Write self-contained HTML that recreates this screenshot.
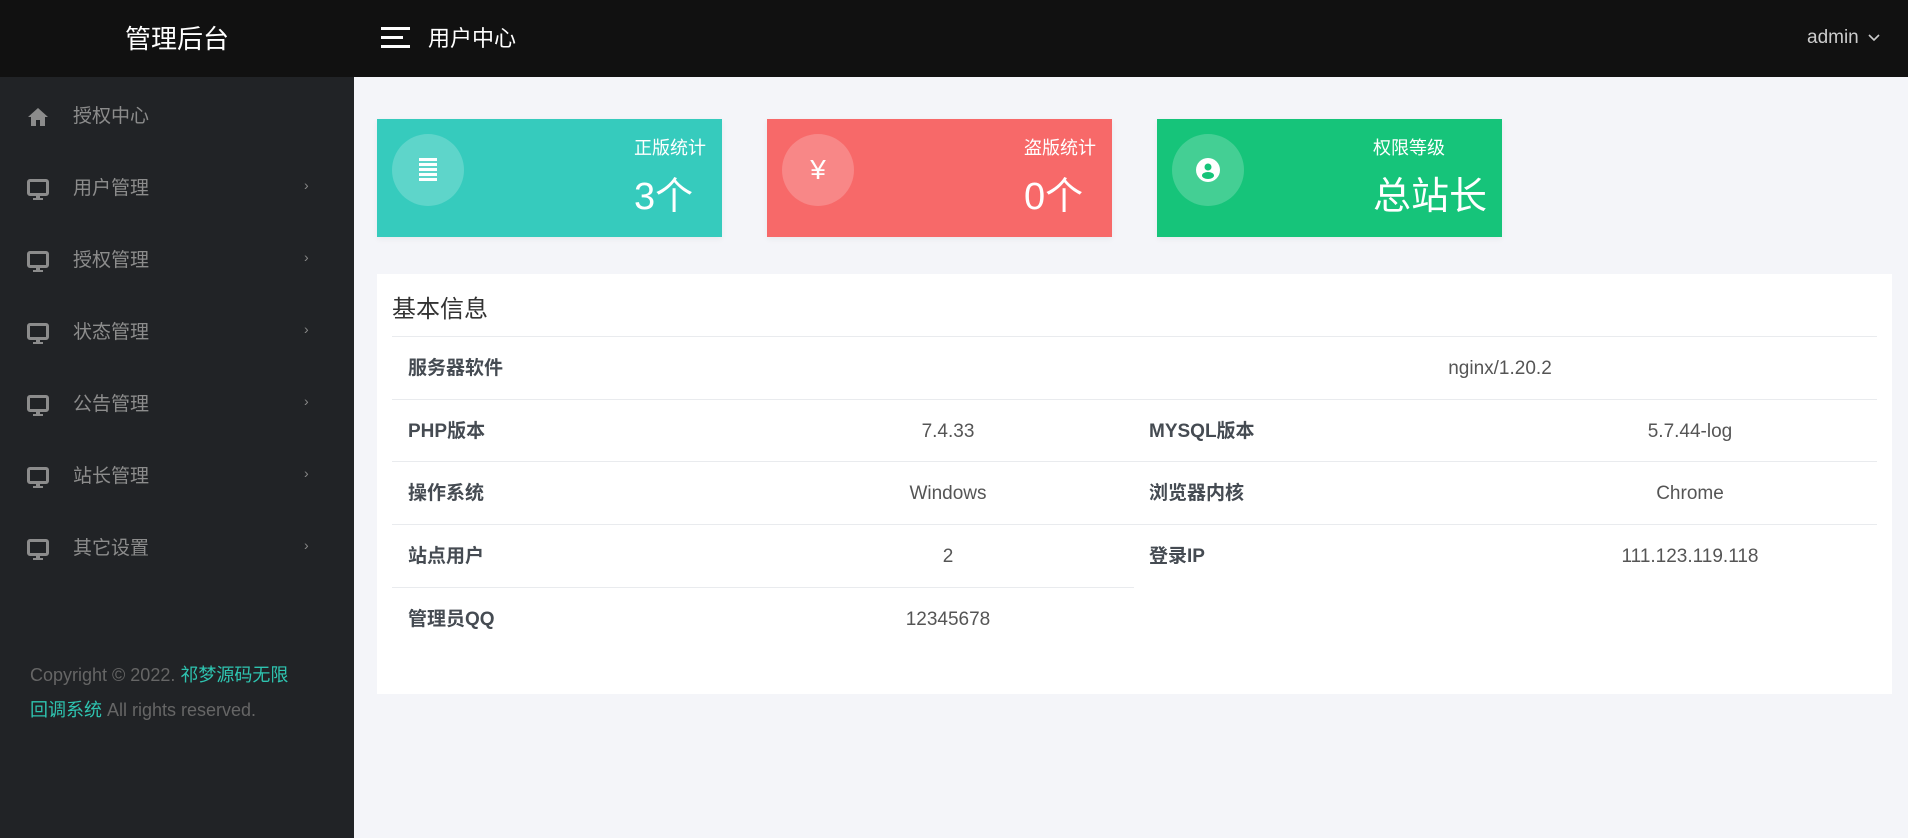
<!DOCTYPE html>
<html><head><meta charset="utf-8"><style>
*{margin:0;padding:0;box-sizing:border-box}
body{width:1908px;height:838px;overflow:hidden;background:#f4f5f9;font-family:"Liberation Sans","Noto Sans CJK SC",sans-serif;position:relative}
.a{position:absolute}
#hd{left:0;top:0;width:1908px;height:77px;background:#111}
#sb{left:0;top:77px;width:354px;height:761px;background:#212326}
.mi{position:absolute;left:0;width:354px;height:40px;color:#8c8c8c;font-size:19px;line-height:40px}
.mi .t{position:absolute;left:73px}
.mi .ic{position:absolute;left:27px;top:10px}
.mi .ch{position:absolute;left:304px;top:-4px;font-size:14px;color:#888}
.card{position:absolute;top:119px;width:345px;height:118px;color:#fff;box-shadow:0 2px 6px rgba(0,0,0,.05)}
.card .c{position:absolute;left:15px;top:15px;width:72px;height:72px;border-radius:50%;background:rgba(255,255,255,.2)}
.card .r{position:absolute;right:16px;top:16px}
.card .l{font-size:18px;line-height:26px}
.card .v{font-size:38px;line-height:50px;margin-top:11px}
#pn{left:377px;top:274px;width:1515px;height:420px;background:#fff}
.ln{position:absolute;height:1px;background:#e9ebee}
.lb{position:absolute;font-weight:bold;font-size:19px;color:#454b52;line-height:24px}
.vl{position:absolute;font-size:19px;color:#555;line-height:24px;text-align:center;width:370px}
</style></head><body>
<div class="a" id="hd">
 <div class="a" style="left:0;width:354px;top:1px;line-height:77px;text-align:center;color:#fff;font-size:26px">管理后台</div>
 <div class="a" style="left:381px;top:27px;width:29px;height:22px">
  <div style="height:3px;background:#fff;width:29px"></div>
  <div style="height:3px;background:#fff;width:22px;margin-top:6px"></div>
  <div style="height:3px;background:#fff;width:29px;margin-top:6px"></div>
 </div>
 <div class="a" style="left:428px;top:0;line-height:77px;color:#fff;font-size:22px">用户中心</div>
 <div class="a" style="left:1807px;top:0;line-height:76px;color:#ccc;font-size:19px">admin <svg width="14" height="10" viewBox="0 0 14 10" style="margin-left:3px"><path d="M2 2l5 5 5-5" fill="none" stroke="#ccc" stroke-width="1.6"/></svg></div>
</div>
<div class="a" id="sb">
 <div class="mi" style="top:20px"><svg class="ic" width="22" height="20" viewBox="0 0 22 20"><path d="M11 1L1 10h3v9h5v-6h4v6h5v-9h3z" fill="#8c8c8c"/></svg><span class="t">授权中心</span></div>
 <div class="mi" style="top:92px"><svg class="ic" width="22" height="22" viewBox="0 0 22 22"><rect x="1.5" y="1.5" width="19" height="14" rx="1.5" fill="none" stroke="#8c8c8c" stroke-width="3"/><rect x="9" y="16" width="4" height="3" fill="#8c8c8c"/><rect x="6" y="19" width="10" height="2" fill="#8c8c8c"/></svg><span class="t">用户管理</span><span class="ch">›</span></div>
 <div class="mi" style="top:164px"><svg class="ic" width="22" height="22" viewBox="0 0 22 22"><rect x="1.5" y="1.5" width="19" height="14" rx="1.5" fill="none" stroke="#8c8c8c" stroke-width="3"/><rect x="9" y="16" width="4" height="3" fill="#8c8c8c"/><rect x="6" y="19" width="10" height="2" fill="#8c8c8c"/></svg><span class="t">授权管理</span><span class="ch">›</span></div>
 <div class="mi" style="top:236px"><svg class="ic" width="22" height="22" viewBox="0 0 22 22"><rect x="1.5" y="1.5" width="19" height="14" rx="1.5" fill="none" stroke="#8c8c8c" stroke-width="3"/><rect x="9" y="16" width="4" height="3" fill="#8c8c8c"/><rect x="6" y="19" width="10" height="2" fill="#8c8c8c"/></svg><span class="t">状态管理</span><span class="ch">›</span></div>
 <div class="mi" style="top:308px"><svg class="ic" width="22" height="22" viewBox="0 0 22 22"><rect x="1.5" y="1.5" width="19" height="14" rx="1.5" fill="none" stroke="#8c8c8c" stroke-width="3"/><rect x="9" y="16" width="4" height="3" fill="#8c8c8c"/><rect x="6" y="19" width="10" height="2" fill="#8c8c8c"/></svg><span class="t">公告管理</span><span class="ch">›</span></div>
 <div class="mi" style="top:380px"><svg class="ic" width="22" height="22" viewBox="0 0 22 22"><rect x="1.5" y="1.5" width="19" height="14" rx="1.5" fill="none" stroke="#8c8c8c" stroke-width="3"/><rect x="9" y="16" width="4" height="3" fill="#8c8c8c"/><rect x="6" y="19" width="10" height="2" fill="#8c8c8c"/></svg><span class="t">站长管理</span><span class="ch">›</span></div>
 <div class="mi" style="top:452px"><svg class="ic" width="22" height="22" viewBox="0 0 22 22"><rect x="1.5" y="1.5" width="19" height="14" rx="1.5" fill="none" stroke="#8c8c8c" stroke-width="3"/><rect x="9" y="16" width="4" height="3" fill="#8c8c8c"/><rect x="6" y="19" width="10" height="2" fill="#8c8c8c"/></svg><span class="t">其它设置</span><span class="ch">›</span></div>
 <div class="a" style="left:30px;top:581px;width:300px;font-size:18px;line-height:35px;color:#666">Copyright © 2022. <span style="color:#2ec4b0">祁梦源码无限<br>回调系统</span> All rights reserved.</div>
</div>

<div class="card" style="left:377px;background:#36cbbd"><div class="c"><svg style="position:absolute;left:27px;top:24px" width="18" height="24" viewBox="0 0 18 24"><g fill="#fff"><rect y="0" width="18" height="3"/><rect y="5" width="18" height="3"/><rect y="10" width="18" height="3"/><rect y="15" width="18" height="3"/><rect y="20" width="18" height="3"/></g></svg></div><div class="r"><div class="l">正版统计</div><div class="v">3个</div></div></div>
<div class="card" style="left:767px;background:#f76969"><div class="c" style="text-align:center;line-height:72px;font-size:28px">¥</div><div class="r"><div class="l">盗版统计</div><div class="v">0个</div></div></div>
<div class="card" style="left:1157px;background:#16c47a"><div class="c"><svg style="position:absolute;left:24px;top:24px" width="24" height="24" viewBox="0 0 24 24"><circle cx="12" cy="12" r="12" fill="#fff"/><circle cx="12" cy="9" r="3.5" fill="#16c47a"/><ellipse cx="12" cy="17.5" rx="6" ry="3.5" fill="#16c47a"/></svg></div><div class="r" style="right:15px"><div class="l">权限等级</div><div class="v">总站长</div></div></div>

<div class="a" id="pn">
 <div class="a" style="left:15px;top:18px;font-size:24px;color:#333;line-height:36px">基本信息</div>
 <div class="ln" style="left:15px;width:1485px;top:62px"></div>
 <div class="ln" style="left:15px;width:1485px;top:125px"></div>
 <div class="ln" style="left:15px;width:1485px;top:187px"></div>
 <div class="ln" style="left:15px;width:1485px;top:250px"></div>
 <div class="ln" style="left:15px;width:742px;top:313px"></div>
 <div class="lb" style="left:31px;top:83px">服务器软件</div>
 <div class="vl" style="left:938px;top:83px">nginx/1.20.2</div>
 <div class="lb" style="left:31px;top:146px">PHP版本</div>
 <div class="vl" style="left:386px;top:146px">7.4.33</div>
 <div class="lb" style="left:772px;top:146px">MYSQL版本</div>
 <div class="vl" style="left:1128px;top:146px">5.7.44-log</div>
 <div class="lb" style="left:31px;top:208px">操作系统</div>
 <div class="vl" style="left:386px;top:208px">Windows</div>
 <div class="lb" style="left:772px;top:208px">浏览器内核</div>
 <div class="vl" style="left:1128px;top:208px">Chrome</div>
 <div class="lb" style="left:31px;top:271px">站点用户</div>
 <div class="vl" style="left:386px;top:271px">2</div>
 <div class="lb" style="left:772px;top:271px">登录IP</div>
 <div class="vl" style="left:1128px;top:271px">111.123.119.118</div>
 <div class="lb" style="left:31px;top:334px">管理员QQ</div>
 <div class="vl" style="left:386px;top:334px">12345678</div>
</div>
</body></html>
